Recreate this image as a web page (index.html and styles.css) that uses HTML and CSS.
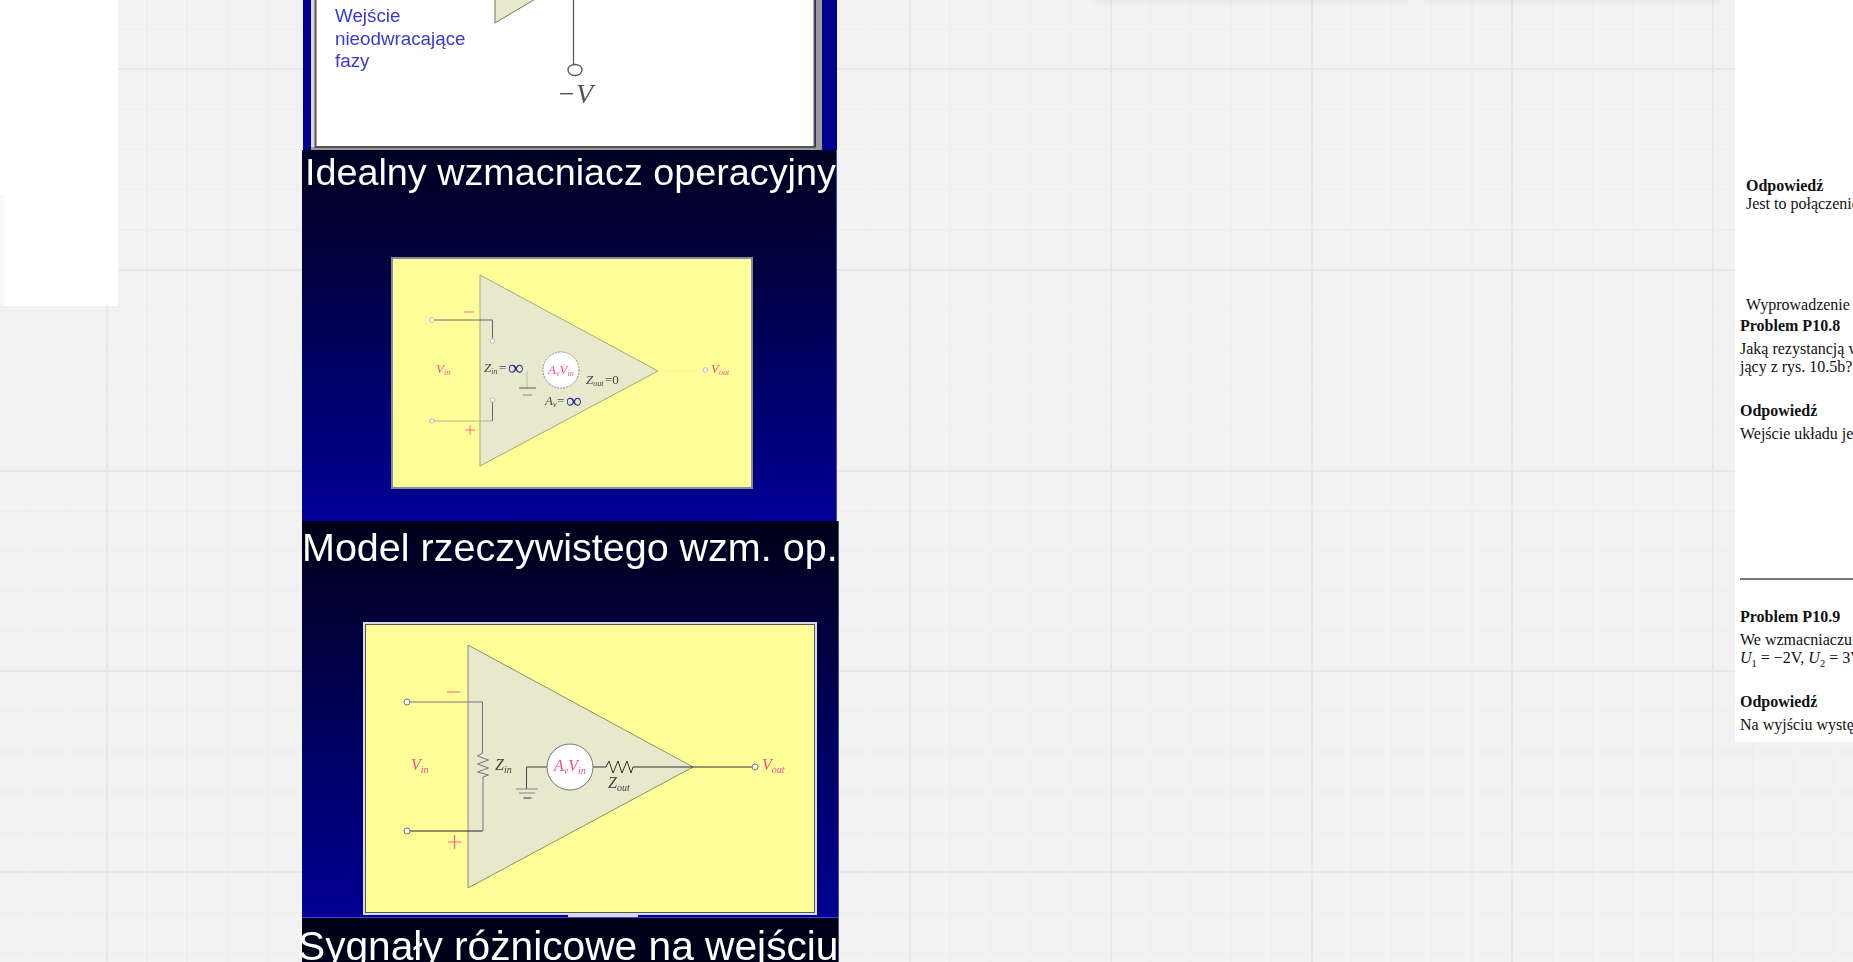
FILE: index.html
```html
<!DOCTYPE html>
<html lang="pl">
<head>
<meta charset="utf-8">
<title>Wzmacniacz operacyjny</title>
<link rel="stylesheet" href="styles.css">
</head>
<body>
<div class="top-shadow shadow-a"></div>
<div class="top-shadow shadow-b"></div>
<main class="canvas">
  <aside class="left-panel"><div class="left-edge"></div></aside>
  <section class="slides">
    <article class="slide slide-one">
      <svg class="art art-one" viewBox="303 0 534 150">
        <rect x="311" y="0" width="4" height="150" fill="#d8d8e0"/>
        <rect x="816" y="0" width="6" height="150" fill="#9a9a9a"/>
        <rect x="311" y="147" width="511" height="3" fill="#999"/>
        <rect x="315.500" y="-4" width="499" height="151" fill="#fff" stroke="#555" stroke-width="2"/>
        <polygon points="495,-2 495,23 537,-2" fill="#e8e8cc" stroke="#77775a"/>
        <line x1="573.500" y1="0" x2="573.500" y2="65" stroke="#555" stroke-width="1.200"/>
        <ellipse cx="575" cy="70" rx="7" ry="5.500" fill="#fff" stroke="#555" stroke-width="1.300"/>
        <text class="mathbig" x="557" y="103">−V</text>
        <text class="blue" x="335" y="21.500">Wejście</text>
        <text class="blue" x="335" y="44.500">nieodwracające</text>
        <text class="blue" x="335" y="67">fazy</text>
      </svg>
    </article>
    <article class="slide slide-two">
      <h2 class="title title-two">Idealny wzmacniacz operacyjny</h2>
      <svg class="art art-two" viewBox="302 200 535 321">
        <rect x="392" y="258" width="360" height="230" fill="#ffff99" stroke="#8a8a9a" stroke-width="2"/>
        <polygon points="480,275 480,466 658,371" fill="#e8e8cc" stroke="#a8a878"/>
        <path d="M432 320H492.500V341" fill="none" stroke="#666" stroke-width="1"/>
        <path d="M432 421H492.500" fill="none" stroke="#b4b488" stroke-width="1"/>
        <path d="M492.500 421V400" fill="none" stroke="#666" stroke-width="1"/>
        <path d="M658 371H702" fill="none" stroke="#f6f69a" stroke-width="1"/>
        <g fill="#fff" stroke="#aaa" stroke-width=".8">
          <circle cx="432" cy="320" r="2.300"/><circle cx="432" cy="421" r="2.300"/>
          <circle cx="492.500" cy="341" r="2.300"/><circle cx="492.500" cy="400" r="2.300"/>
          <circle cx="705.500" cy="370" r="2.300"/>
        </g>
        <circle cx="561" cy="370" r="18" fill="#fff" stroke="#666" stroke-dasharray="2 1" stroke-width=".7"/>
        <path d="M464 312H474M465 430H475M470 425V435" stroke="#ff6a90" stroke-width="1"/>
        <path d="M527 371V388" stroke="#bbb" stroke-width="1"/>
        <path d="M519 388H536" stroke="#555" stroke-width="1"/>
        <path d="M523 395H532" stroke="#888" stroke-width="1"/>
        <text class="pink it s13" x="436" y="373">V<tspan class="s8" dy="2">in</tspan></text>
        <text class="dark it s13" x="484" y="372">Z<tspan class="s8" dy="2">in</tspan></text>
        <text class="dark s13" x="499" y="372">=</text>
        <text class="navy s22" x="508" y="375">∞</text>
        <text class="pink it s13" x="548" y="374">A<tspan class="s8" dy="2">v</tspan><tspan dy="-2">V</tspan><tspan class="s8" dy="2">in</tspan></text>
        <text class="dark it s13" x="586" y="384">Z<tspan class="s8" dy="2">out</tspan></text>
        <text class="dark s13" x="605" y="384">=0</text>
        <text class="dark it s13" x="545" y="405">A<tspan class="s8" dy="2">v</tspan></text>
        <text class="dark s13" x="557" y="405">=</text>
        <text class="navy s22" x="566" y="408">∞</text>
        <text class="pink it s13" x="711" y="373">V<tspan class="s8" dy="2">out</tspan></text>
      </svg>
    </article>
    <article class="slide slide-three">
      <h2 class="title title-three">Model rzeczywistego wzm. op.</h2>
      <svg class="art art-three" viewBox="302 571 537 347">
        <rect x="364" y="623" width="452" height="291" fill="#ffff99" stroke="#dcdcea" stroke-width="2"/>
        <rect x="365.500" y="624.500" width="449" height="288" fill="none" stroke="#555" stroke-width="1"/>
        <rect x="568" y="914" width="70" height="4" fill="#d8d8e8"/>
        <rect x="302" y="917" width="537" height="1" fill="#4444cc"/>
        <polygon points="468,645 468,888 693,767" fill="#e8e8cc" stroke="#8f8f66"/>
        <path d="M410 702H482.500V753l-5 3 11 4-11 4 11 4-11 4 11 3-5.500 2V831" fill="none" stroke="#777" stroke-width="1"/>
        <path d="M410 831H482.500" fill="none" stroke="#222" stroke-width="1"/>
        <path d="M547 767H526.500V789" fill="none" stroke="#444" stroke-width="1"/>
        <path d="M516 789H538M519 793H535" stroke="#888" stroke-width="1"/>
        <path d="M523.500 798H531.500" stroke="#333" stroke-width="1"/>
        <path d="M593 767H606l3-6 4 12 5-12 4 12 5-12 4 12 2-6H752" fill="none" stroke="#333" stroke-width="1"/>
        <circle cx="570" cy="767" r="23" fill="#fff" stroke="#777" stroke-width="1"/>
        <g fill="#fff" stroke="#777" stroke-width="1">
          <circle cx="407" cy="702" r="3"/><circle cx="407" cy="831" r="3"/><circle cx="755" cy="767" r="3"/>
        </g>
        <path d="M447 692H460M448 842H461M454.500 835V849" stroke="#ff5a80" stroke-width="1.200"/>
        <text class="pink it s16" x="411" y="770">V<tspan class="s10" dy="3">in</tspan></text>
        <text class="dark it s16" x="495" y="770">Z<tspan class="s10" dy="3">in</tspan></text>
        <text class="pink it s16" x="554" y="771">A<tspan class="s10" dy="3">v</tspan><tspan dy="-3">V</tspan><tspan class="s10" dy="3">in</tspan></text>
        <text class="dark it s16" x="608" y="788">Z<tspan class="s10" dy="3">out</tspan></text>
        <text class="pink it s16" x="762" y="770">V<tspan class="s10" dy="3">out</tspan></text>
      </svg>
    </article>
    <article class="slide slide-four">
      <h2 class="title title-four">Sygnały różnicowe na wejściu</h2>
    </article>
  </section>
  <aside class="right-panel">
    <p class="line bold inset">Odpowiedź</p>
    <p class="line inset">Jest to połączenie</p>
    <p class="line inset gap-derive">Wyprowadzenie wzoru</p>
    <p class="line bold gap-s">Problem P10.8</p>
    <p class="line gap-xs">Jaką rezystancją wejściową</p>
    <p class="line">jący z rys. 10.5b?.</p>
    <p class="line bold gap-m">Odpowiedź</p>
    <p class="line gap-xs">Wejście układu jest</p>
    <hr class="rule">
    <p class="line bold gap-r">Problem P10.9</p>
    <p class="line gap-xs">We wzmacniaczu różnicowym</p>
    <p class="line"><i>U</i><sub>1</sub> = −2V, <i>U</i><sub>2</sub> = 3V</p>
    <p class="line bold gap-m">Odpowiedź</p>
    <p class="line gap-xs">Na wyjściu występuje</p>
  </aside>
</main>
</body>
</html>
```
FILE: styles.css
```css
* { box-sizing: border-box; }
html, body { margin: 0; height: 100%; overflow: hidden; }
body {
  width: 1853px;
  height: 962px;
  position: relative;
  background-color: #f2f2f2;
  background-image:
    repeating-linear-gradient(90deg, transparent 0, transparent 106.2px, #e8e8e8 106.2px, #e8e8e8 108px, transparent 108px, transparent 200.75px),
    repeating-linear-gradient(180deg, transparent 0, transparent 68.2px, #e7e7e7 68.2px, #e7e7e7 70px, transparent 70px, transparent 200.75px),
    repeating-linear-gradient(90deg, transparent 0, transparent 25.9px, #eeeeee 25.9px, #eeeeee 27.1px, transparent 27.1px, transparent 40.15px),
    repeating-linear-gradient(180deg, transparent 0, transparent 28.6px, #eeeeee 28.6px, #eeeeee 29.8px, transparent 29.8px, transparent 40.15px);
}
.canvas { display: flex; align-items: flex-start; height: 962px; overflow: hidden; }

.top-shadow { position: absolute; top: -8px; height: 8px; box-shadow: 0 0 8px rgba(0,0,0,.08); }
.shadow-a { left: 1094px; width: 314px; }
.shadow-b { left: 1425px; width: 295px; }

.left-panel { width: 118px; height: 306px; background: #fff; flex: none; }
.left-edge { width: 6px; height: 112px; margin-top: 194px; background: linear-gradient(90deg, #f7f7f7, #fff); }

.slides { flex: none; width: 537px; margin-left: 184px; display: flex; flex-direction: column; }
.slide { background: #000090; overflow: hidden; }
.art { display: block; filter: blur(.4px); }
.title {
  margin: 0;
  height: 50px;
  color: #fff;
  font: 400 38px/38px "Liberation Sans", Arial, sans-serif;
  white-space: nowrap;
  filter: blur(.3px);
}
.slide-one { width: 534px; height: 150px; margin-left: 1px; }
.art-one { width: 534px; height: 150px; }
.slide-two { width: 535px; height: 371px; background: linear-gradient(#000022 0, #000038 25%, #000060 55%, #000096 100%); border-right: 1px solid #4444cc; }
.title-two { padding: 3px 0 0 3px; font-size: 37.75px; }
.art-two { width: 535px; height: 321px; }
.slide-three { width: 537px; height: 397px; background: linear-gradient(#000018 0, #000034 22%, #000068 60%, #000094 100%); border-right: 1px solid #55556a; }
.title-three { padding-top: 7px; font-size: 39.5px; }
.art-three { width: 537px; height: 347px; }
.slide-four { width: 537px; height: 44px; background: #000018; overflow: visible; border-right: 1px solid #55556a; }
.title-four { margin-left: -4px; padding: 9px 0 0; height: 44px; font-size: 40.7px; }

svg text { font-family: "Liberation Serif", serif; }
svg text.blue { font-family: "Liberation Sans", Arial, sans-serif; font-size: 18.8px; fill: #3a3ad0; }
.mathbig { font-size: 28px; font-style: italic; fill: #555; }
.pink { fill: #ff4a80; }
.dark { fill: #444; }
.navy { fill: #20209a; }
.it { font-style: italic; }
.s8 { font-size: 8px; }
.s10 { font-size: 10px; }
.s13 { font-size: 13px; }
.s16 { font-size: 16px; }
.s22 { font-size: 22px; }

.right-panel {
  flex: none;
  width: 118px;
  height: 742px;
  margin-left: 896px;
  background: #fff;
  padding: 177px 0 0 5px;
  overflow: hidden;
  color: #111;
  font: 16px/18px "Liberation Serif", serif;
}
.line { margin: 0; white-space: nowrap; height: 18px; }
.bold { font-weight: 700; }
.inset { padding-left: 6px; }
.line sub { font-size: 10.5px; line-height: 0; }
.gap-derive { margin-top: 83px; }
.gap-s { margin-top: 3px; }
.gap-xs { margin-top: 5px; }
.gap-m { margin-top: 26px; }
.gap-r { margin-top: 28px; }
.rule { margin: 135px 0 0; height: 2px; border: 0; width: 113px; background: #777; }
```
